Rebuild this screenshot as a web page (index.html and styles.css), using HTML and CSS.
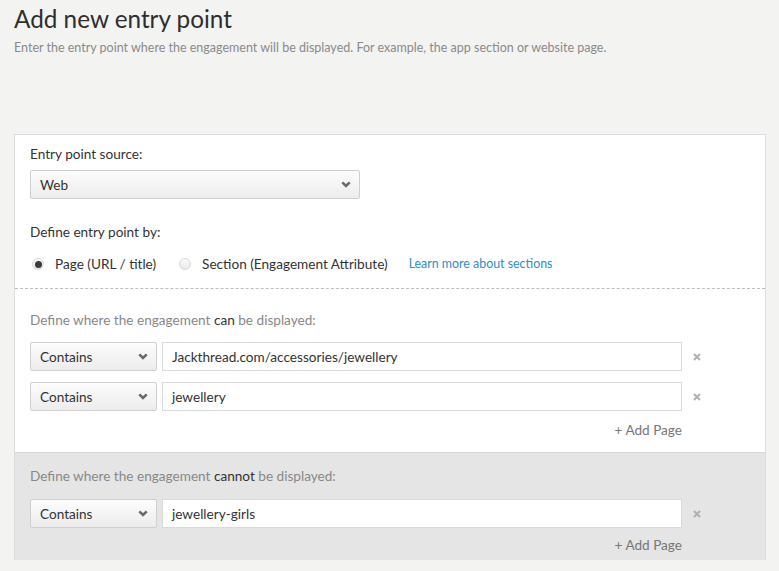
FILE: index.html
```html
<!DOCTYPE html>
<html lang="en">
<head>
<meta charset="utf-8">
<title>Add new entry point</title>
<link rel="stylesheet" href="styles.css">
</head>
<body>
<header class="page-head">
  <h1 class="title">Add new entry point</h1>
  <p class="subtitle">Enter the entry point where the engagement will be displayed. For example, the app section or website page.</p>
</header>

<div class="card">
  <section class="sec sec-source">
    <div class="label">Entry point source:</div>
    <div class="select select-wide">
      <span>Web</span>
      <svg class="chev" width="10" height="7" viewBox="0 0 10 7"><path d="M1.3 1.3 L5 5 L8.7 1.3" fill="none" stroke="#6a6a6a" stroke-width="2.6" stroke-linejoin="miter"/></svg>
    </div>
    <div class="label label-define">Define entry point by:</div>
    <div class="radios">
      <span class="radio checked"></span><span class="radio-label">Page (URL / title)</span>
      <span class="radio"></span><span class="radio-label">Section (Engagement Attribute)</span>
      <a class="link" href="#">Learn more about sections</a>
    </div>
  </section>

  <section class="sec sec-can">
    <div class="label muted">Define where the engagement <b>can</b> be displayed:</div>
    <div class="rules">
      <div class="rule-row">
        <div class="select select-small"><span>Contains</span><svg class="chev" width="10" height="7" viewBox="0 0 10 7"><path d="M1.3 1.3 L5 5 L8.7 1.3" fill="none" stroke="#6a6a6a" stroke-width="2.6"/></svg></div>
        <div class="input">Jackthread.com/accessories/jewellery</div>
        <svg class="remove" width="8" height="8" viewBox="0 0 8 8"><path d="M1 1 L7 7 M7 1 L1 7" stroke="#b0b0b0" stroke-width="2"/></svg>
      </div>
      <div class="rule-row">
        <div class="select select-small"><span>Contains</span><svg class="chev" width="10" height="7" viewBox="0 0 10 7"><path d="M1.3 1.3 L5 5 L8.7 1.3" fill="none" stroke="#6a6a6a" stroke-width="2.6"/></svg></div>
        <div class="input">jewellery</div>
        <svg class="remove" width="8" height="8" viewBox="0 0 8 8"><path d="M1 1 L7 7 M7 1 L1 7" stroke="#b0b0b0" stroke-width="2"/></svg>
      </div>
      <div class="add">+ Add Page</div>
    </div>
  </section>

  <section class="sec sec-cannot">
    <div class="label muted">Define where the engagement <b>cannot</b> be displayed:</div>
    <div class="rules">
      <div class="rule-row">
        <div class="select select-small"><span>Contains</span><svg class="chev" width="10" height="7" viewBox="0 0 10 7"><path d="M1.3 1.3 L5 5 L8.7 1.3" fill="none" stroke="#6a6a6a" stroke-width="2.6"/></svg></div>
        <div class="input">jewellery-girls</div>
        <svg class="remove" width="8" height="8" viewBox="0 0 8 8"><path d="M1 1 L7 7 M7 1 L1 7" stroke="#b0b0b0" stroke-width="2"/></svg>
      </div>
      <div class="add">+ Add Page</div>
    </div>
  </section>
</div>
</body>
</html>
```

FILE: styles.css
```css
html, body {
  margin: 0;
  padding: 0;
  background: #f3f3f2;
  font-family: Lato, "Open Sans", "Liberation Sans", sans-serif;
  color: #333;
}

.page-head {
  padding: 5px 14px 0;
}

.title {
  margin: 0;
  font-size: 24.3px;
  line-height: 28px;
  font-weight: 400;
  color: #2e2e2e;
}

.subtitle {
  margin: 7px 0 0;
  font-size: 12.5px;
  line-height: 16px;
  color: #8a8a8a;
}

.card {
  margin: 78px 13px 0 14px;
  background: #fff;
  border: 1px solid #dcdcdc;
  border-bottom: none;
}

.sec {
  padding-left: 15px;
}

.sec-source {
  padding-top: 11px;
  padding-bottom: 16px;
  border-bottom: 1px dashed #bdbdbd;
}

.label {
  font-size: 13.6px;
  line-height: 16px;
  color: #333;
}

.label b {
  font-weight: 400;
  color: #333;
}

.muted {
  color: #888;
}

.label-define {
  margin-top: 25px;
}

.select {
  box-sizing: border-box;
  height: 29px;
  display: flex;
  align-items: center;
  justify-content: space-between;
  padding: 0 8px 0 9px;
  border: 1px solid #cfcfcf;
  border-radius: 2px;
  background: linear-gradient(#fdfdfd, #ececec);
  font-size: 13.6px;
  color: #333;
}

.select-wide {
  width: 330px;
  margin-top: 8px;
}

.select-small {
  width: 127px;
  flex: none;
}

.chev {
  display: block;
}

.radios {
  margin-top: 16px;
  display: flex;
  align-items: center;
  font-size: 13.6px;
  line-height: 16px;
}

.radio {
  box-sizing: border-box;
  width: 12px;
  height: 12px;
  border-radius: 50%;
  border: 1px solid #dadada;
  background: linear-gradient(#fafafa, #e9e9e9);
  margin-left: 2px;
  margin-right: 11px;
  display: flex;
  align-items: center;
  justify-content: center;
}

.radio.checked::after {
  content: "";
  width: 7px;
  height: 7px;
  border-radius: 50%;
  background: #3a3a3a;
}

.radio-label {
  margin-right: 21px;
}

.link {
  font-size: 12.4px;
  color: #2b8fc2;
  text-decoration: none;
}

.sec-can {
  padding-top: 23px;
  padding-bottom: 14px;
}

.rules {
  width: 652px;
  margin-top: 14px;
}

.rule-row {
  display: flex;
  align-items: center;
  margin-bottom: 11px;
  width: 680px;
}

.input {
  box-sizing: border-box;
  width: 520px;
  height: 29px;
  margin-left: 5px;
  padding: 0 9px;
  display: flex;
  align-items: center;
  border: 1px solid #dadada;
  background: #fff;
  font-size: 13.6px;
  color: #333;
}

.remove {
  margin-left: 11px;
  flex: none;
}

.add {
  text-align: right;
  font-size: 13.6px;
  line-height: 16px;
  color: #777;
}

.sec-cannot {
  background: #e5e5e5;
  border-top: 1px solid #d6d6d6;
  padding-top: 15px;
  padding-bottom: 7px;
}

.sec-cannot .rules {
  margin-top: 15px;
}

.sec-cannot .rule-row {
  margin-bottom: 9px;
}
```
